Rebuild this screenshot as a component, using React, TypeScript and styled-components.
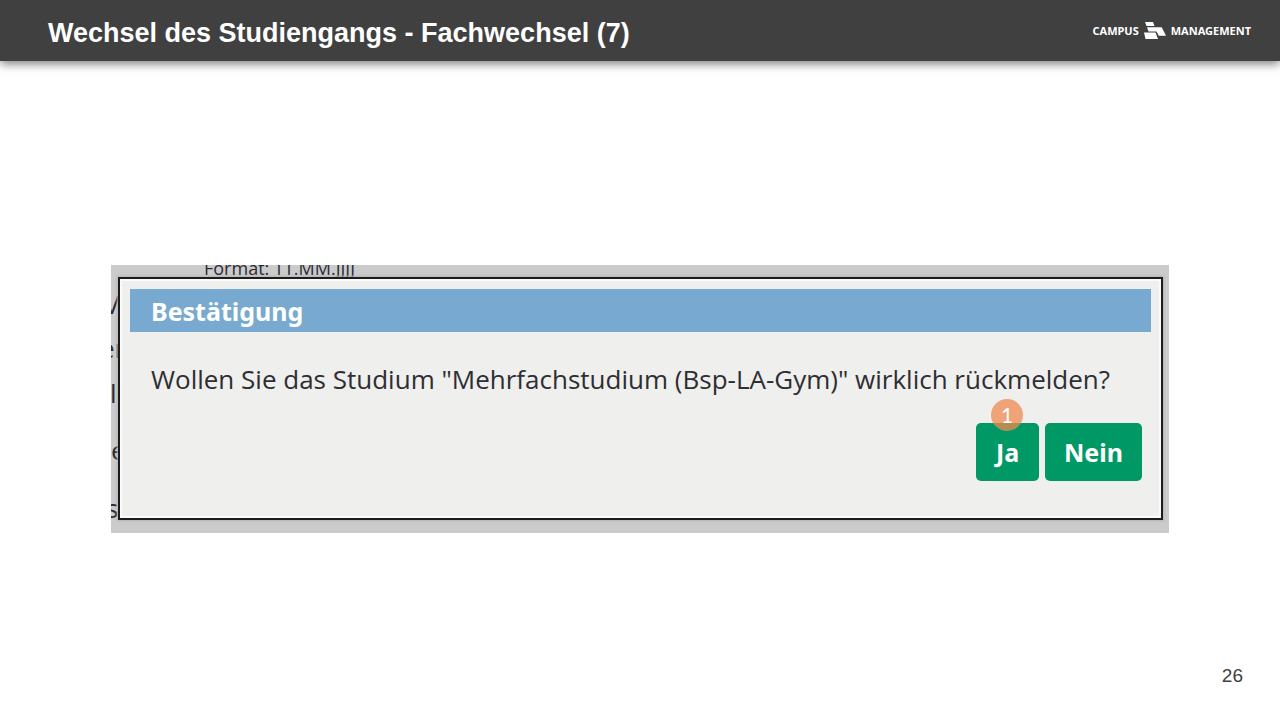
import React from "react";
import styled, { createGlobalStyle } from "styled-components";

const GlobalStyle = createGlobalStyle`
  *, *::before, *::after { box-sizing: border-box; }
  body { margin: 0; background: #ffffff; font-family: "Liberation Sans", Arial, sans-serif; }
`;

const Slide = styled.div`
  display: flex;
  flex-direction: column;
  min-height: 100vh;
`;

const TopBar = styled.header`
  display: flex;
  align-items: center;
  justify-content: space-between;
  height: 61px;
  padding: 4px 29px 0 48px;
  background: #404040;
  box-shadow: 0 3px 9px rgba(0, 0, 0, 0.5);
  color: #ffffff;
`;

const Title = styled.h1`
  margin: 0;
  font-size: 27px;
  line-height: 32px;
  font-weight: 700;
`;

const Brand = styled.div`
  display: flex;
  align-items: center;
  gap: 5px;
  padding-bottom: 4px;
  font-family: "Noto Sans", sans-serif;
  font-size: 11px;
  line-height: 16px;
  font-weight: 700;
`;

const Main = styled.main`
  padding: 204px 111px 0;
`;

const Backdrop = styled.div`
  position: relative;
  overflow: hidden;
  padding: 12px 6px 13px 7px;
  background: #cbcbcb;
  font-family: "Open Sans", "Noto Sans", sans-serif;
`;

const Covered = styled.span<{ $left: number; $top: number; $small?: boolean }>`
  position: absolute;
  left: ${(p) => p.$left}px;
  top: ${(p) => p.$top}px;
  font-size: ${(p) => (p.$small ? 18 : 26)}px;
  line-height: 24px;
  white-space: nowrap;
  color: #2b2b33;
`;

const Dialog = styled.section`
  position: relative;
  min-height: 243px;
  padding: 10px 10px 37px;
  border: 2px solid #1c1c1c;
  background: #efefed;
  box-shadow: inset 0 0 0 2px #fafafa, 0 0 2px 1px #b4b4b4;
`;

const DialogTitle = styled.h2`
  margin: 0;
  padding: 6px 21px 5px;
  background: #78a9d0;
  color: #ffffff;
  font-family: "Noto Sans", sans-serif;
  font-size: 25px;
  line-height: 32px;
  font-weight: 700;
`;

const Question = styled.p`
  margin: 0;
  padding: 31px 21px 28px;
  color: #2e2e33;
  font-size: 26px;
  line-height: 32px;
`;

const Actions = styled.div`
  display: flex;
  justify-content: flex-end;
  gap: 6px;
  padding-right: 9px;
`;

const ActionSlot = styled.div`
  position: relative;
`;

const ActionButton = styled.button`
  min-width: 63px;
  height: 58px;
  padding: 0 19px;
  border: 0;
  border-radius: 5px;
  background: #009966;
  color: #ffffff;
  font: 700 25px/32px "Noto Sans", sans-serif;
`;

const StepBadge = styled.span`
  position: absolute;
  left: 15px;
  top: -24px;
  width: 32px;
  height: 32px;
  border-radius: 50%;
  background: rgba(240, 138, 80, 0.75);
  color: #ffffff;
  font: 400 21px/32px Lato, "Noto Sans", sans-serif;
  text-align: center;
`;

const Footer = styled.footer`
  margin-top: auto;
  padding: 0 37px 32px;
  color: #404040;
  font-size: 19px;
  line-height: 24px;
  text-align: right;
`;

const coveredTexts = [
  { text: "Format: TT.MM.JJJJ", left: 93, top: -9, small: true },
  { text: "V", left: -7, top: 27 },
  { text: "er", left: -11, top: 71 },
  { text: "le", left: -1, top: 116 },
  { text: "e", left: 0, top: 173 },
  { text: "s", left: -5, top: 231 },
];

export default function App() {
  return (
    <Slide>
      <GlobalStyle />
      <TopBar>
        <Title>Wechsel des Studiengangs - Fachwechsel (7)</Title>
        <Brand>
          <span>CAMPUS</span>
          <svg width="22" height="18" viewBox="0 0 22 18" fill="#ffffff" aria-hidden="true">
            <path d="M1 0H9L10.500 4H2.500Z M3 5.300H17.700L22 13.700H14.800L12.500 9.500H4.500Z M0 10.500H11.500L14 17H1.500Z" />
          </svg>
          <span>MANAGEMENT</span>
        </Brand>
      </TopBar>
      <Main>
        <Backdrop>
          {coveredTexts.map((c) => (
            <Covered key={c.text} $left={c.left} $top={c.top} $small={c.small} aria-hidden="true">
              {c.text}
            </Covered>
          ))}
          <Dialog role="dialog" aria-labelledby="dialog-title">
            <DialogTitle id="dialog-title">Bestätigung</DialogTitle>
            <Question>Wollen Sie das Studium "Mehrfachstudium (Bsp-LA-Gym)" wirklich rückmelden?</Question>
            <Actions>
              <ActionSlot>
                <ActionButton type="button">Ja</ActionButton>
                <StepBadge>1</StepBadge>
              </ActionSlot>
              <ActionButton type="button">Nein</ActionButton>
            </Actions>
          </Dialog>
        </Backdrop>
      </Main>
      <Footer>26</Footer>
    </Slide>
  );
}
